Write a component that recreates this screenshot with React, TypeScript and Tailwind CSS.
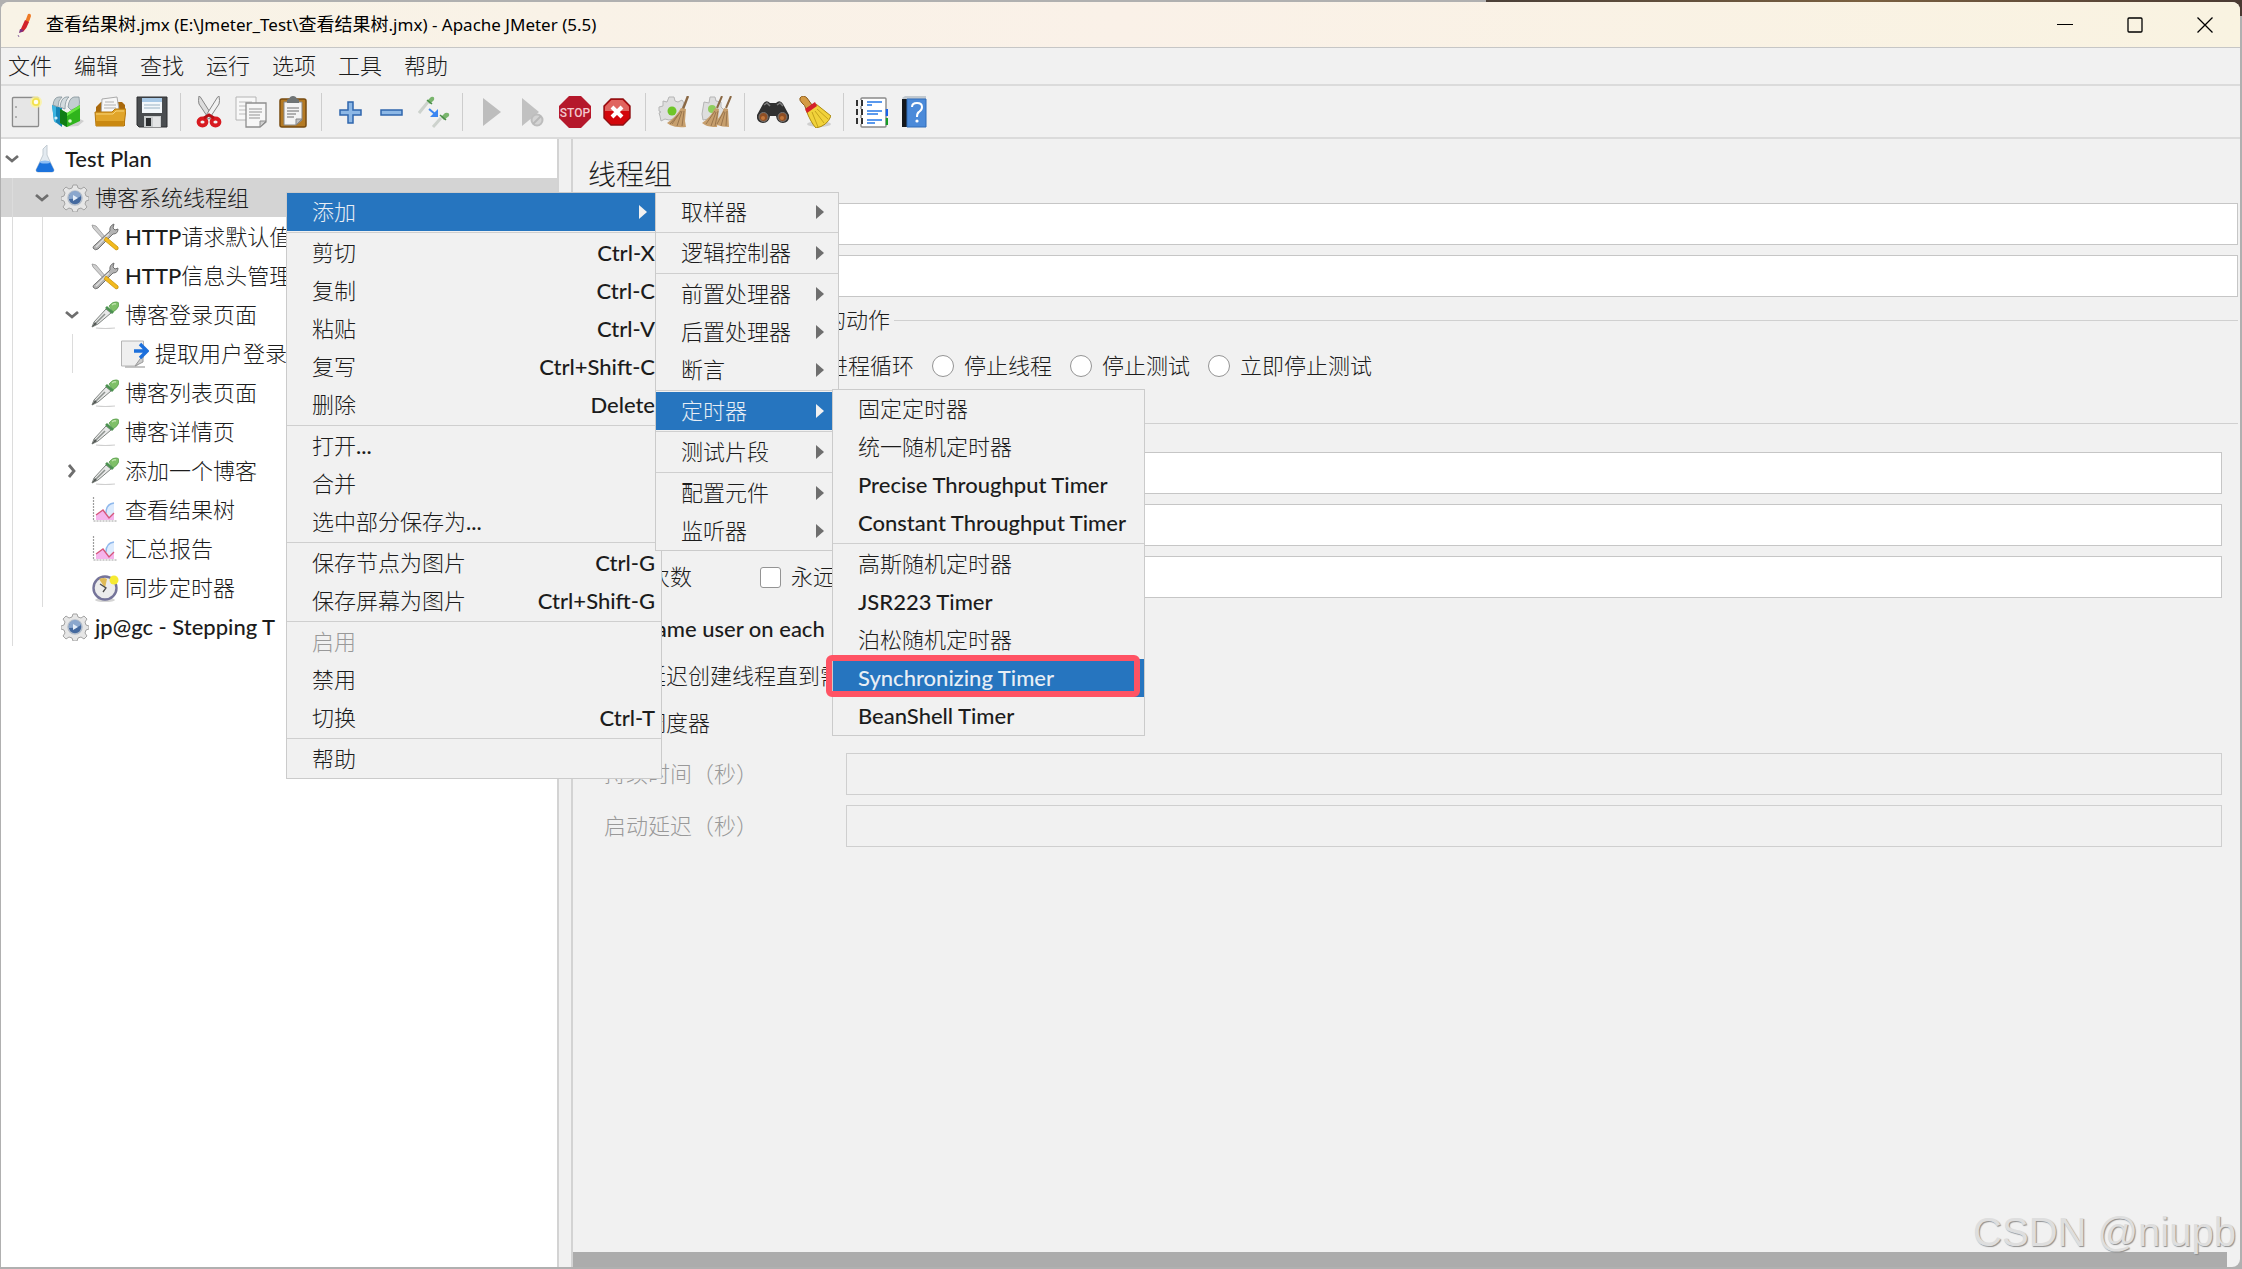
import React from 'react';

type IconProps = { className?: string };
type MenuEntry = {
  label: string;
  shortcut?: string;
  disabled?: boolean;
  active?: boolean;
  marked?: boolean;
  arrow?: boolean;
  submenu?: MenuEntry[][];
};

/* ---------- toolbar icons ---------- */

const NewIcon: React.FC<IconProps> = ({ className }) => (
  <svg viewBox="0 0 32 32" className={className}>
    <rect x="2.5" y="1.5" width="26" height="29" rx="1" fill="#f1f1f1" stroke="#8b8b8b" strokeWidth="1.4" />
    <rect x="4" y="3" width="23" height="26" fill="#e6e6e6" />
    <path d="M6 10v2M6 20v2" stroke="#999" strokeWidth="1.4" />
    <circle cx="26" cy="6" r="6" fill="#fbf3a0" opacity=".8" />
    <circle cx="26" cy="6" r="3.2" fill="#fffdf0" stroke="#f3e24d" strokeWidth="1.8" />
  </svg>
);

const TemplatesIcon: React.FC<IconProps> = ({ className }) => (
  <svg viewBox="0 0 32 32" className={className}>
    <path d="M26 22l6 3-6 5-14 1z" fill="#cfcfcf" />
    <path d="M0 9l10 3v19L2 25z" fill="#1583b5" />
    <path d="M0 9l4 1v17l-2-2z" fill="#3db4e0" />
    <path d="M1 9q1-8 6-8h3q-4 3-4 10z" fill="#c3cdd1" stroke="#84939a" strokeWidth=".8" />
    <path d="M8 11q1-9 6-10h3q-4 3-4 12z" fill="#d3dbde" stroke="#84939a" strokeWidth=".8" />
    <path d="M16 11q1-9 6-10h5q1 5 0 10l-8 3z" fill="#c3cdd1" stroke="#84939a" strokeWidth=".8" />
    <path d="M8 13l7 4 13-8v16l-13 6-7-4z" fill="#2fb41c" />
    <path d="M8 13l7 4v14l-7-4z" fill="#117d15" />
    <path d="M15 17l13-8v3l-13 8z" fill="#64e43d" />
    <circle cx="4" cy="22" r="1.600" fill="#d4effa" />
    <circle cx="18" cy="25" r="1.800" fill="#dcf9d2" />
  </svg>
);

const OpenIcon: React.FC<IconProps> = ({ className }) => (
  <svg viewBox="0 0 32 32" className={className}>
    <path d="M2 11l5-5h21l3 3v21H2z" fill="#a9690c" />
    <path d="M8 3l15-2 3 19H7z" fill="#f7f7f7" stroke="#aaa" />
    <path d="M11 6h9M10 9h12M10 12h12" stroke="#b1b1b1" strokeWidth="1.2" />
    <path d="M1 16h17l3-3h11l-2 17H2z" fill="#e1a52a" stroke="#b5780f" />
    <path d="M2 18h17l3-3h8" stroke="#f8d477" fill="none" />
    <path d="M2 25h28l-1 5H2z" fill="#c98810" />
  </svg>
);

const SaveIcon: React.FC<IconProps> = ({ className }) => (
  <svg viewBox="0 0 32 32" className={className}>
    <path d="M1 1h30v30H3l-2-2z" fill="#4a4d50" stroke="#2c2e30" />
    <rect x="6" y="2" width="20" height="15" fill="#f4f8fb" />
    <path d="M6 2h20v4H6z" fill="#a9c9e6" />
    <path d="M8 9h16M8 12h16" stroke="#b8c9d6" strokeWidth="1.4" />
    <rect x="8" y="20" width="17" height="11" fill="#c9cccd" />
    <rect x="10" y="22" width="5" height="8" fill="#2b2d2f" />
    <path d="M17 21h7v10h-7z" fill="#e4e5e6" />
  </svg>
);

const CutIcon: React.FC<IconProps> = ({ className }) => (
  <svg viewBox="0 0 32 32" className={className}>
    <path d="M6 0q1 0 2 2l12 19-4 2L6 8q-1-3 0-8z" fill="#dcdcdc" stroke="#858585" />
    <path d="M26 0q-1 0-2 2L12 21l4 2L26 8q1-3 0-8z" fill="#f2f2f2" stroke="#858585" />
    <ellipse cx="9.500" cy="26" rx="4" ry="3.500" fill="none" stroke="#d81a20" strokeWidth="3.800" />
    <ellipse cx="22.500" cy="26" rx="4" ry="3.500" fill="none" stroke="#d81a20" strokeWidth="3.800" />
    <path d="M11 22l5-3 5 3" fill="none" stroke="#b80f15" strokeWidth="3" />
  </svg>
);

const CopyIcon: React.FC<IconProps> = ({ className }) => (
  <svg viewBox="0 0 32 32" className={className}>
    <path d="M1 1h20v23H1z" fill="#f8f8f8" stroke="#b4b4b4" />
    <path d="M4 6h13M4 10h10M4 14h8M4 18h8" stroke="#d0d0d0" strokeWidth="1.4" />
    <path d="M11 7h20v19l-6 5H11z" fill="#f7f7f7" stroke="#8e8e8e" strokeWidth="1.3" />
    <path d="M31 25h-6v6z" fill="#cfcfcf" stroke="#8e8e8e" />
    <path d="M14 13h13M14 16h13M14 19h11M14 22h11" stroke="#b5b5b5" strokeWidth="1.3" />
  </svg>
);

const PasteIcon: React.FC<IconProps> = ({ className }) => (
  <svg viewBox="0 0 32 32" className={className}>
    <rect x="3" y="3" width="26" height="28" rx="2" fill="#b47a24" stroke="#774b10" strokeWidth="1.5" />
    <path d="M7 6h18v18l-6 5H7z" fill="#f4f4f4" stroke="#888" />
    <path d="M10 7V4q0-1 2-1 1-3 4-3t4 3q2 0 2 1v3z" fill="#6f7475" />
    <path d="M10 12h12M10 15h12M10 18h9M10 21h7" stroke="#999" strokeWidth="1.4" />
    <path d="M25 23h-6v6z" fill="#bfbfbf" stroke="#888" />
  </svg>
);

const PlusIcon: React.FC<IconProps> = ({ className }) => (
  <svg viewBox="0 0 32 32" className={className}>
    <path d="M14 6h5v8h8v5h-8v8h-5v-8H6v-5h8z" fill="#8db8e6" stroke="#2f66ad" strokeWidth="1.5" />
  </svg>
);

const MinusIcon: React.FC<IconProps> = ({ className }) => (
  <svg viewBox="0 0 32 32" className={className}>
    <path d="M5 14h21v5H5z" fill="#8db8e6" stroke="#2f66ad" strokeWidth="1.5" />
  </svg>
);

const ToggleIcon: React.FC<IconProps> = ({ className }) => (
  <svg viewBox="0 0 32 32" className={className}>
    <path d="M1 17L10 6" stroke="#cdd2cd" strokeWidth="3" />
    <path d="M9 5l4-4q4-1 3 3l-4 4z" fill="#79b56d" />
    <path d="M9 4l5 4" stroke="#4a8c48" strokeWidth="1.600" />
    <path d="M11 13l6 5" stroke="#3b86f2" strokeWidth="2" />
    <path d="M20 13v8h-8z" fill="#3b86f2" />
    <path d="M15 31l8-9" stroke="#cdd2cd" strokeWidth="3" />
    <path d="M23 21l4-4q5-1 4 3l-5 4z" fill="#79b56d" />
    <path d="M22 19l6 5" stroke="#4a8c48" strokeWidth="1.600" />
  </svg>
);

const PlayIcon: React.FC<IconProps> = ({ className }) => (
  <svg viewBox="0 0 32 32" className={className}>
    <path d="M8 2l18 14L8 30z" fill="#bdbdbd" />
  </svg>
);

const PlayNoPauseIcon: React.FC<IconProps> = ({ className }) => (
  <svg viewBox="0 0 32 32" className={className}>
    <path d="M5 2l17 14L5 30z" fill="#c1c1c1" />
    <circle cx="20" cy="24" r="5.500" fill="#d4d4d4" stroke="#bdbdbd" strokeWidth="2" />
    <path d="M16 28l8-8" stroke="#b8b8b8" strokeWidth="2" />
  </svg>
);

const StopIcon: React.FC<IconProps> = ({ className }) => (
  <svg viewBox="0 0 32 32" className={className}>
    <path d="M10 0h12l10 10v12L22 32H10L0 22V10z" fill="#b5182b" />
    <text x="16" y="20.500" textAnchor="middle" fontFamily="Roboto" fontSize="12" fontWeight="500" fill="#f3c9ce">
      STOP
    </text>
  </svg>
);

const ShutdownIcon: React.FC<IconProps> = ({ className }) => (
  <svg viewBox="0 0 32 32" className={className}>
    <path d="M10 3h12l7 7v12l-7 7H10l-7-7V10z" fill="#d3060b" stroke="#8f1113" strokeWidth="1.4" />
    <path d="M10.500 4h11l6.500 6.500V15H4v-4.500z" fill="#e0655f" />
    <path d="M11 11l10 10M21 11L11 21" stroke="#fff" strokeWidth="4" />
  </svg>
);

const ClearIcon: React.FC<IconProps> = ({ className }) => (
  <svg viewBox="0 0 32 32" className={className}>
    <path
      d="M11 1h5l1 4 3 1 4-2 2 3-2 6-4 9-9 2-4-1-4 2-1-5-1-3 2-1-2-1v-4l4-1 0-5 4 1z"
      fill="#dedede"
      stroke="#b5b5b5"
    />
    <circle cx="14" cy="15" r="4.500" fill="#6fc629" />
    <path d="M30 0l-5 13" stroke="#8a6844" strokeWidth="2.400" />
    <path d="M23 12l5 1-1 12 1 6q-10 1-16-2l-3-2q9-6 14-15z" fill="#c79f6d" />
    <path d="M23 15l-9 13M24 15l-5 15M26 15l-2 15M20 19l-8 9" stroke="#94714a" strokeWidth=".9" />
  </svg>
);

const ClearAllIcon: React.FC<IconProps> = ({ className }) => (
  <svg viewBox="0 0 32 32" className={className}>
    <path d="M10 1h5l1 4 5 1v5l3 3-3 9-9 2-4-2-5 1-1-6 1-6 1-6 5 1z" fill="#dedede" stroke="#b5b5b5" />
    <circle cx="12" cy="13" r="4" fill="#8fce5d" />
    <path d="M22 0l-5 12M31 0l-5 12" stroke="#8a6844" strokeWidth="2" />
    <path d="M15 12l4 1-2 18q-8 0-12-2l-3-2q9-6 13-15z" fill="#c79f6d" />
    <path d="M24 12l4 1 1 18q-7 0-12-2l-3-2q7-6 10-15z" fill="#c79f6d" />
    <path d="M15 15L6 28M16 16l-5 14M18 15l-3 15M24 15l-7 13M25 16l-4 14M27 15l-1 15" stroke="#94714a" strokeWidth=".9" />
  </svg>
);

const SearchIcon: React.FC<IconProps> = ({ className }) => (
  <svg viewBox="0 0 32 32" className={className}>
    <path d="M6 8q3-5 7-1h6q4-4 7 1l6 11q1 7-6 8-6 0-7-7h-6q-1 7-7 7-7-1-6-8z" fill="#303030" />
    <path d="M7 9l3-2 3 3M20 9l3-2 3 3" stroke="#7d7d7d" strokeWidth="1.5" fill="none" />
    <circle cx="6.500" cy="21" r="4.500" fill="#8f4f25" stroke="#777" />
    <circle cx="25.500" cy="21" r="4.500" fill="#8f4f25" stroke="#777" />
    <circle cx="6" cy="22" r="2" fill="#c2763a" />
    <circle cx="25" cy="22" r="2" fill="#c2763a" />
  </svg>
);

const BroomIcon: React.FC<IconProps> = ({ className }) => (
  <svg viewBox="0 0 32 32" className={className}>
    <ellipse cx="20" cy="28" rx="12" ry="3" fill="#cfcfcf" />
    <path d="M1 2q3-4 7 0l5 7-6 4q-1-4-4-6-3-3-2-5z" fill="#d49b45" stroke="#8b5a1a" />
    <path d="M7 14l10-6 15 12q-4 10-15 12-5-5-10-18z" fill="#f1d23a" stroke="#ac8a12" />
    <path d="M13 16l6 15M16 15l9 12M18 13l11 10" stroke="#c4a31c" />
    <path d="M6 13l10-7 2 4-10 7z" fill="#d4202a" />
  </svg>
);

const FunctionIcon: React.FC<IconProps> = ({ className }) => (
  <svg viewBox="0 0 32 32" className={className}>
    <rect x="5" y="2" width="25" height="29" rx="1" fill="#fff" stroke="#8a8a8a" strokeWidth="1.4" />
    <path d="M0 7h7M0 16h7M0 25h7" stroke="#333" strokeWidth="6" />
    <path d="M2 7h3M2 16h3M2 25h3" stroke="#f1f1f1" strokeWidth="6" />
    <path d="M11 6h15M11 9h5M11 15h15M11 18h11M11 24h15M11 27h8" stroke="#2478e8" strokeWidth="1.7" />
    <path d="M31 13v7" stroke="#1a62e8" strokeWidth="2.500" />
    <path d="M31 22v7" stroke="#169c25" strokeWidth="2.500" />
  </svg>
);

const HelpIcon: React.FC<IconProps> = ({ className }) => (
  <svg viewBox="0 0 32 32" className={className}>
    <path d="M4 2l3-2h21v3H5z" fill="#c0c8cf" />
    <path d="M4 3h6v28H4z" fill="#15181c" />
    <path d="M9 3h19v28H9z" fill="#4b8ad9" stroke="#316cb8" />
    <path d="M14 11q0-4 5-4t5 4q0 3-3 5-2 1-2 5" fill="none" stroke="#fff" strokeWidth="2" />
    <circle cx="19" cy="25" r="1.600" fill="#fff" />
  </svg>
);

const toolbarGroups = [
  [
    { name: 'New', Icon: NewIcon },
    { name: 'Templates', Icon: TemplatesIcon },
    { name: 'Open', Icon: OpenIcon },
    { name: 'Save', Icon: SaveIcon },
  ],
  [
    { name: 'Cut', Icon: CutIcon },
    { name: 'Copy', Icon: CopyIcon },
    { name: 'Paste', Icon: PasteIcon },
  ],
  [
    { name: 'Expand', Icon: PlusIcon },
    { name: 'Collapse', Icon: MinusIcon },
    { name: 'Toggle', Icon: ToggleIcon },
  ],
  [
    { name: 'Start', Icon: PlayIcon },
    { name: 'Start no pauses', Icon: PlayNoPauseIcon },
    { name: 'Stop', Icon: StopIcon },
    { name: 'Shutdown', Icon: ShutdownIcon },
  ],
  [
    { name: 'Clear', Icon: ClearIcon },
    { name: 'Clear all', Icon: ClearAllIcon },
  ],
  [
    { name: 'Search', Icon: SearchIcon },
    { name: 'Reset search', Icon: BroomIcon },
  ],
  [
    { name: 'Function helper', Icon: FunctionIcon },
    { name: 'Help', Icon: HelpIcon },
  ],
];

/* ---------- tree icons ---------- */

const FlaskIcon: React.FC<IconProps> = ({ className }) => (
  <svg viewBox="0 0 28 28" className={className}>
    <path d="M12 4l4-4v10l7 15q0 2-2 2H7q-2 0-2-2l7-15z" fill="#e3eaf0" stroke="#c3ccd3" />
    <path d="M9 17h10l4 8q0 2-2 2H7q-2 0-2-2z" fill="#1b72dc" />
    <ellipse cx="14" cy="17" rx="5" ry="1.500" fill="#8dbdf3" />
  </svg>
);

const GearIcon: React.FC<IconProps> = ({ className }) => (
  <svg viewBox="0 0 28 28" className={className}>
    <path
      d="M12 1h4l1 3 3 1 3-2 3 3-2 3 1 3 3 1v3l-3 1-1 3 2 3-3 3-3-2-3 1-1 3h-4l-1-3-3-1-3 2-3-3 2-3-1-3-3-1v-3l3-1 1-3-2-3 3-3 3 2 3-1z"
      fill="#e6e6e6"
      stroke="#a3a3a3"
    />
    <circle cx="14" cy="14" r="7" fill="#44699f" stroke="#b3bdca" strokeWidth="1.500" />
    <path d="M8 12q2-5 6-5t6 5q-3 3-12 3z" fill="#8ba7cd" />
    <path d="M12 11l5 3-5 3z" fill="#e4edf8" />
  </svg>
);

const ToolsIcon: React.FC<IconProps> = ({ className }) => (
  <svg viewBox="0 0 28 28" className={className}>
    <path d="M1 2l4 1 10 12-2 2L2 5z" fill="#cfcfcf" stroke="#969696" strokeWidth=".8" />
    <path d="M19 8q-1-5 4-7l-1 4 2 2 3-1q0 5-5 5L7 26q-3 2-5-1 0-2 2-3z" fill="#b4b4b4" stroke="#707070" />
    <path d="M5 24l13-13" stroke="#dfdfdf" strokeWidth="1.4" />
    <path d="M15 14l12 10q1 3-2 3L13 17z" fill="#f3ba1c" stroke="#c9960f" strokeWidth=".8" />
  </svg>
);

const DropperIcon: React.FC<IconProps> = ({ className }) => (
  <svg viewBox="0 0 28 28" className={className}>
    <path d="M5 27q9 1 19 0" stroke="#cfcfcf" strokeWidth="1.200" fill="none" />
    <path d="M15 8l5 4L7 23l-6 3 2-5z" fill="#e8e8e8" stroke="#7c827e" />
    <path d="M5 22L14 13" stroke="#8e9490" strokeWidth="1.600" />
    <path d="M1 26l3-5 2 2z" fill="#4f5451" />
    <path d="M18 5q4-5 8-4 2 0 2 3-1 4-6 7z" fill="#7fc068" stroke="#5d9f50" strokeWidth=".8" />
    <path d="M15 6l7 6" stroke="#4b9150" strokeWidth="2.800" />
    <path d="M21 4q2-2 4-1" stroke="#bfe4ad" strokeWidth="1.400" fill="none" />
  </svg>
);

const ExtractorIcon: React.FC<IconProps> = ({ className }) => (
  <svg viewBox="0 0 28 28" className={className}>
    <path d="M4 27h20" stroke="#c5c5c5" strokeWidth="2" />
    <path d="M.5 1h22v16l-7 9H.5z" fill="#efefef" stroke="#b4b4b4" />
    <path d="M22 15l-8 11 8-4z" fill="#cdcdcd" stroke="#999" />
    <path d="M13 11h13M19 4l7 7-7 7" fill="none" stroke="#1d70dc" strokeWidth="3.4" />
  </svg>
);

const ChartIcon: React.FC<IconProps> = ({ className }) => (
  <svg viewBox="0 0 28 28" className={className}>
    <path d="M2.500 1v24H26" fill="none" stroke="#9d9d9d" strokeDasharray="2 1" strokeWidth="1.200" />
    <path d="M15 17q0-9 8-10v16h-6z" fill="#dcebfd" />
    <path d="M15 17q0-9 8-10" fill="none" stroke="#8fb8ec" strokeWidth="1.400" />
    <path d="M5 19l7-5 6 8 5-5v7H5z" fill="#f5b4ec" />
    <path d="M5 19l7-5 6 8 5-5" fill="none" stroke="#d6577c" strokeWidth="1.400" />
  </svg>
);

const ClockIcon: React.FC<IconProps> = ({ className }) => (
  <svg viewBox="0 0 28 28" className={className}>
    <ellipse cx="14" cy="26" rx="10" ry="2" fill="#d4d4d4" />
    <circle cx="14" cy="14" r="11.500" fill="#ececec" stroke="#75749a" strokeWidth="2.400" />
    <path d="M14 14L8 5q5-2 8 0z" fill="#e0bb55" />
    <path d="M9 10l6 4-3 4" fill="none" stroke="#4b4b4b" strokeWidth="1.300" />
    <circle cx="23" cy="6" r="4.500" fill="#f6ea33" />
  </svg>
);

type TreeRow = {
  depth: number;
  label: string;
  Icon: React.FC<IconProps>;
  toggle?: 'open' | 'closed';
  selected?: boolean;
};

const treeRows: TreeRow[] = [
  { depth: 0, label: 'Test Plan', Icon: FlaskIcon, toggle: 'open' },
  { depth: 1, label: '博客系统线程组', Icon: GearIcon, toggle: 'open', selected: true },
  { depth: 2, label: 'HTTP请求默认值', Icon: ToolsIcon },
  { depth: 2, label: 'HTTP信息头管理', Icon: ToolsIcon },
  { depth: 2, label: '博客登录页面', Icon: DropperIcon, toggle: 'open' },
  { depth: 3, label: '提取用户登录', Icon: ExtractorIcon },
  { depth: 2, label: '博客列表页面', Icon: DropperIcon },
  { depth: 2, label: '博客详情页', Icon: DropperIcon },
  { depth: 2, label: '添加一个博客', Icon: DropperIcon, toggle: 'closed' },
  { depth: 2, label: '查看结果树', Icon: ChartIcon },
  { depth: 2, label: '汇总报告', Icon: ChartIcon },
  { depth: 2, label: '同步定时器', Icon: ClockIcon },
  { depth: 1, label: 'jp@gc - Stepping T', Icon: GearIcon },
];

const timerMenu: MenuEntry[][] = [
  [
    { label: '固定定时器' },
    { label: '统一随机定时器' },
    { label: 'Precise Throughput Timer' },
    { label: 'Constant Throughput Timer' },
  ],
  [
    { label: '高斯随机定时器' },
    { label: 'JSR223 Timer' },
    { label: '泊松随机定时器' },
    { label: 'Synchronizing Timer', active: true, marked: true },
    { label: 'BeanShell Timer' },
  ],
];

const addMenu: MenuEntry[][] = [
  [{ label: '取样器', arrow: true }],
  [{ label: '逻辑控制器', arrow: true }],
  [
    { label: '前置处理器', arrow: true },
    { label: '后置处理器', arrow: true },
    { label: '断言', arrow: true },
  ],
  [{ label: '定时器', arrow: true, active: true, submenu: timerMenu }],
  [{ label: '测试片段', arrow: true }],
  [
    { label: '配置元件', arrow: true },
    { label: '监听器', arrow: true },
  ],
];

const contextMenu: MenuEntry[][] = [
  [{ label: '添加', arrow: true, active: true, submenu: addMenu }],
  [
    { label: '剪切', shortcut: 'Ctrl-X' },
    { label: '复制', shortcut: 'Ctrl-C' },
    { label: '粘贴', shortcut: 'Ctrl-V' },
    { label: '复写', shortcut: 'Ctrl+Shift-C' },
    { label: '删除', shortcut: 'Delete' },
  ],
  [{ label: '打开...' }, { label: '合并' }, { label: '选中部分保存为...' }],
  [
    { label: '保存节点为图片', shortcut: 'Ctrl-G' },
    { label: '保存屏幕为图片', shortcut: 'Ctrl+Shift-G' },
  ],
  [{ label: '启用', disabled: true }, { label: '禁用' }, { label: '切换', shortcut: 'Ctrl-T' }],
  [{ label: '帮助' }],
];

// Latin runs are set heavier than the Chinese ones
const Mixed: React.FC<{ text: string }> = ({ text }) => (
  <>
    {text.split(/([\x20-\x7e]+)/).filter(Boolean).map((run, i) =>
      /^[\x20-\x7e]/.test(run) ? (
        <span key={i} className="font-medium">{run}</span>
      ) : (
        <span key={i} className="font-light">{run}</span>
      )
    )}
  </>
);

const TitleBar: React.FC = () => (
  <header className="flex h-[46px] items-center rounded-t-lg border-b border-[#c6c6c6] bg-linear-to-r from-[#f8f3e6] via-[#faf1e8] to-[#f9f3e1] pl-[15px]">
    <svg viewBox="0 0 16 24" className="h-6 w-4">
      <path d="M12 1q3-1 3 2-1 4-3 7L9 9z" fill="#ee7a25" />
      <path d="M9 7l4 2q-2 6-6 10l-3-1z" fill="#d2232a" />
      <path d="M4 16l4 1q-2 3-5 3z" fill="#7c2f80" />
      <path d="M2 22l1 2" stroke="#8d6aa0" />
    </svg>
    <h1 className="ml-3.5 font-['Noto_Sans','Noto_Sans_CJK_SC',sans-serif] text-[17px] leading-6 text-black">
      <span className="text-lg leading-6">查看结果树</span>.jmx (E:\Jmeter_Test\
      <span className="text-lg leading-6">查看结果树</span>.jmx) - Apache JMeter (5.5)
    </h1>
    <div className="ml-auto flex h-full">
      <button aria-label="Minimize" className="grid w-[70px] place-items-center">
        <svg viewBox="0 0 16 16" className="size-4"><path d="M0 7.500h16" stroke="#000" /></svg>
      </button>
      <button aria-label="Maximize" className="grid w-[70px] place-items-center">
        <svg viewBox="0 0 16 16" className="size-4"><rect x="1" y="1" width="14" height="14" rx="1" fill="none" stroke="#000" strokeWidth="1.300" /></svg>
      </button>
      <button aria-label="Close" className="grid w-[70px] place-items-center">
        <svg viewBox="0 0 16 16" className="size-4"><path d="M.5.5l15 15M15.500.5l-15 15" stroke="#000" strokeWidth="1.300" /></svg>
      </button>
    </div>
  </header>
);

const MenuBar: React.FC = () => (
  <nav className="flex h-[38px] items-center gap-[22px] border-b-2 border-[#dbdbdb] pl-[7px]">
    {['文件', '编辑', '查找', '运行', '选项', '工具', '帮助'].map((item) => (
      <button key={item} className="leading-8"><Mixed text={item} /></button>
    ))}
  </nav>
);

const Toolbar: React.FC = () => (
  <div className="flex h-[53px] items-center border-b-2 border-[#dbdbdb] pl-1">
    {toolbarGroups.map((group, i) => (
      <React.Fragment key={i}>
        {i > 0 && <span className="mx-[7px] h-[38px] w-px bg-[#cdcdcd]" />}
        {group.map(({ name, Icon }) => (
          <button key={name} aria-label={name} className="grid w-[42px] place-items-center">
            <Icon className="size-8" />
          </button>
        ))}
      </React.Fragment>
    ))}
  </div>
);

const Tree: React.FC = () => (
  <aside className="w-[558px] shrink-0 overflow-hidden border-r-2 border-[#d3d3d3] bg-white">
    <ul>
      {treeRows.map(({ depth, label, Icon, toggle, selected }) => (
        <li key={label} className={selected ? 'flex h-[39px] items-center bg-[#d4d4d4]' : 'flex h-[39px] items-center'}>
          {Array.from({ length: depth }, (_, i) => (
            <span key={i} className="h-full w-[30px] shrink-0 pl-[11px]">
              <span className="block h-full w-px bg-[#dcdcdc]" />
            </span>
          ))}
          <span className="w-[30px] shrink-0 pl-[3px]">
            {toggle && (
              <svg viewBox="0 0 16 16" className="size-4">
                <path
                  d={toggle === 'open' ? 'M2 5l6 5 6-5' : 'M5 2l5 6-5 6'}
                  fill="none"
                  stroke="#6e6e6e"
                  strokeWidth="2.800"
                />
              </svg>
            )}
          </span>
          <Icon className="size-7 shrink-0" />
          <span className="ml-1.5 whitespace-nowrap"><Mixed text={label} /></span>
        </li>
      ))}
    </ul>
  </aside>
);

const inputClass = 'h-[42px] min-w-0 flex-1 border border-[#c6c6c6] bg-white px-2 disabled:border-[#cfcfcf] disabled:bg-[#f1f1f1]';
const checkClass = 'size-[21px] appearance-none rounded-[3px] border border-[#949494] bg-white';

const CheckRow: React.FC<{ id: string; label: string }> = ({ id, label }) => (
  <div className="flex h-[47px] items-center gap-2.5 pl-[9px]">
    <input type="checkbox" id={id} className={checkClass} />
    <label htmlFor={id}><Mixed text={label} /></label>
  </div>
);

const ThreadGroupPanel: React.FC = () => (
  <main className="ml-3 flex min-w-0 flex-1 flex-col border-l-2 border-[#d3d3d3]">
    <div className="flex-1 pr-0.5 pl-[15px]">
      <h2 className="pt-3.5 pb-2 text-[28px] leading-[42px]"><Mixed text="线程组" /></h2>

      <div className="flex flex-col gap-2.5 pl-24">
        <input aria-label="名称" type="text" className={`${inputClass} flex-none`} />
        <input aria-label="注释" type="text" className={`${inputClass} flex-none`} />
      </div>

      <fieldset className="mt-[7px] border-t border-[#d0d0d0] pl-[118px]">
        <legend className="-ml-[106px] px-1 leading-8"><Mixed text="在取样器错误后要执行的动作" /></legend>
        <div className="flex items-center gap-[18px] pt-[18px] pb-[29px]">
          {['启动下一进程循环', '停止线程', '停止测试', '立即停止测试'].map((action) => (
            <label key={action} className="flex h-6 items-center gap-2.5">
              <input
                type="radio"
                name="onError"
                className="size-[22px] appearance-none rounded-full border border-[#949494] bg-white"
              />
              <span><Mixed text={action} /></span>
            </label>
          ))}
        </div>
      </fieldset>

      <fieldset aria-label="线程属性" className="mt-4 border-t border-[#d0d0d0] px-4 pt-7">
        <div className="flex flex-col gap-2.5">
          <input aria-label="线程数" type="text" className={`${inputClass} ml-[242px] flex-none`} />
          <input aria-label="Ramp-Up时间（秒）" type="text" className={`${inputClass} ml-[242px] flex-none`} />
          <div className="flex items-center">
            <label htmlFor="loops" className="w-[156px]"><Mixed text="循环次数" /></label>
            <span className="flex w-[86px] items-center gap-2.5">
              <input id="forever" type="checkbox" className={checkClass} />
              <label htmlFor="forever"><Mixed text="永远" /></label>
            </span>
            <input id="loops" type="text" className={inputClass} />
          </div>
        </div>
        <div className="my-[7px]">
          <CheckRow id="sameUser" label="Same user on each" />
          <CheckRow id="delayed" label="延迟创建线程直到需要" />
          <CheckRow id="scheduler" label="调度器" />
        </div>
        <div className="space-y-2.5 text-[#999]">
          <div className="flex items-center">
            <label htmlFor="duration" className="w-[242px]"><Mixed text="持续时间（秒）" /></label>
            <input id="duration" type="text" disabled className={inputClass} />
          </div>
          <div className="flex items-center">
            <label htmlFor="delay" className="w-[242px]"><Mixed text="启动延迟（秒）" /></label>
            <input id="delay" type="text" disabled className={inputClass} />
          </div>
        </div>
      </fieldset>
    </div>
    <div className="mr-[13px] h-[15px] bg-[#acacac]" />
  </main>
);

const MenuItem: React.FC<{ entry: MenuEntry }> = ({ entry }) => {
  const tone = entry.active ? 'bg-[#2675bf] text-[#e8eef5]' : entry.disabled ? 'text-[#999]' : '';
  return (
    <li className="relative">
      <button
        disabled={entry.disabled}
        className={`flex h-[38px] w-full items-center justify-between pl-[25px] whitespace-nowrap ${entry.arrow ? 'pr-3.5' : 'pr-1.5'} ${tone}`}
      >
        <span><Mixed text={entry.label} /></span>
        {entry.shortcut && <span><Mixed text={entry.shortcut} /></span>}
        {entry.arrow && (
          <svg viewBox="0 0 8 14" className="h-3.5 w-2">
            <path d="M0 0l8 7-8 7z" fill={entry.active ? '#f1f1f1' : '#6e6e6e'} />
          </svg>
        )}
      </button>
      {entry.marked && (
        <span className="pointer-events-none absolute -top-1 right-1 bottom-0 -left-[7px] rounded-md border-6 border-[#ff5364]" />
      )}
      {entry.submenu && (
        <Menu
          groups={entry.submenu}
          className={entry.submenu === addMenu ? 'absolute -top-px left-full -ml-1.5 w-[184px]' : 'absolute -top-[3px] left-full -ml-1.5 w-[313px]'}
        />
      )}
    </li>
  );
};

const Menu: React.FC<{ groups: MenuEntry[][]; className: string }> = ({ groups, className }) => (
  <ul className={`border border-[#cbcbcb] bg-[#f1f1f1] text-[#1c1c1c] ${className}`}>
    {groups.map((group, i) => (
      <React.Fragment key={i}>
        {i > 0 && <li className="my-px h-px bg-[#cfcfcf]" />}
        {group.map((entry) => (
          <MenuItem key={entry.label} entry={entry} />
        ))}
      </React.Fragment>
    ))}
  </ul>
);

const App: React.FC = () => {
  return (
    <div className="relative flex min-h-screen flex-col overflow-hidden bg-[#b0b0b0] pt-0.5 pr-0.5 pb-0.5 pl-px font-['Lato','Noto_Sans_CJK_SC',sans-serif] text-[22px] leading-[30px] text-[#1c1c1c]">
      <div className="absolute top-0 right-0 h-4 w-[756px] bg-linear-to-r from-[#4b4038] via-[#7a6040] to-[#4a3a33]" />
      <div className="relative flex flex-1 flex-col rounded-t-lg rounded-br-lg bg-[#f1f1f1]">
        <TitleBar />
        <MenuBar />
        <Toolbar />
        <div className="flex flex-1">
          <Tree />
          <ThreadGroupPanel />
        </div>
      </div>
      <Menu groups={contextMenu} className="absolute top-48 left-[286px] w-[376px]" />
      <div className="pointer-events-none absolute right-1.5 bottom-3.5 font-['Liberation_Sans',sans-serif] text-[40px] leading-[46px] text-[#dedede] text-shadow-[1px_1px_1px_#8f8f8f]">
        CSDN @niupb
      </div>
    </div>
  );
};

export default App;
